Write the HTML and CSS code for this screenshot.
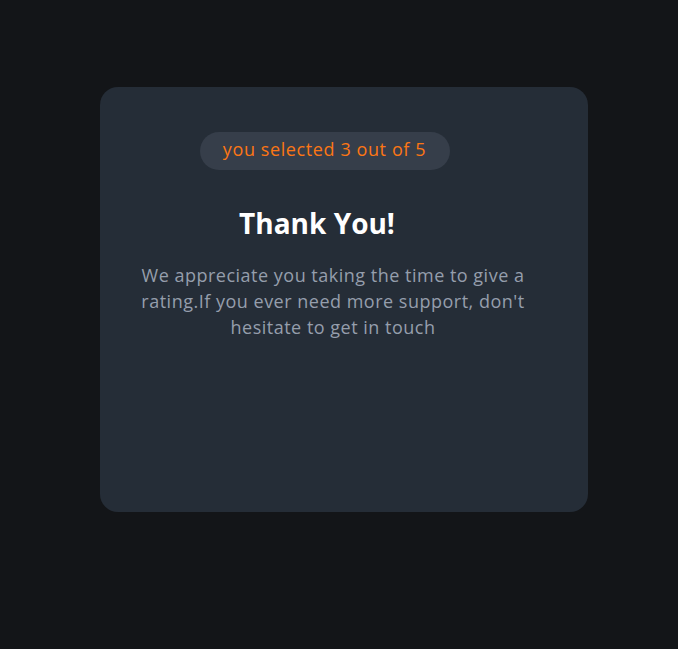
FILE: index.html
```html
<!DOCTYPE html>
<html lang="en">
<head>
<meta charset="utf-8">
<title>Thank you</title>
<link rel="stylesheet" href="styles.css">
</head>
<body>
<main class="card">
  <p class="pill">you selected 3 out of 5</p>
  <h1 class="title">Thank You!</h1>
  <p class="text">We appreciate you taking the time to give a rating.If you ever need more support, don't hesitate to get in touch</p>
</main>
</body>
</html>
```

FILE: styles.css
```css
html, body {
  margin: 0;
  padding: 0;
}
body {
  background: #131518;
  font-family: "Open Sans", "Noto Sans", sans-serif;
  min-height: 649px;
}
.card {
  box-sizing: border-box;
  margin: 87px 0 0 100px;
  width: 488px;
  height: 425px;
  background: #252d37;
  border-radius: 18px;
  padding: 45px 62px 0 40px;
  display: flex;
  flex-direction: column;
  align-items: center;
}
.pill {
  margin: 0 17px 0 0;
  width: 250px;
  height: 38px;
  box-sizing: border-box;
  border-radius: 19px;
  background: #363e4a;
  color: #fc7614;
  font-size: 18px;
  letter-spacing: 0.6px;
  display: flex;
  align-items: center;
  justify-content: center;
  padding-bottom: 4px;
}
.title {
  margin: 35px 32px 0 0;
  color: #ffffff;
  font-size: 28px;
  font-weight: 700;
  line-height: 36px;
}
.text {
  margin: 21px 0 0 0;
  color: #959eac;
  font-size: 18px;
  letter-spacing: 0.5px;
  line-height: 26px;
  text-align: center;
}
```
